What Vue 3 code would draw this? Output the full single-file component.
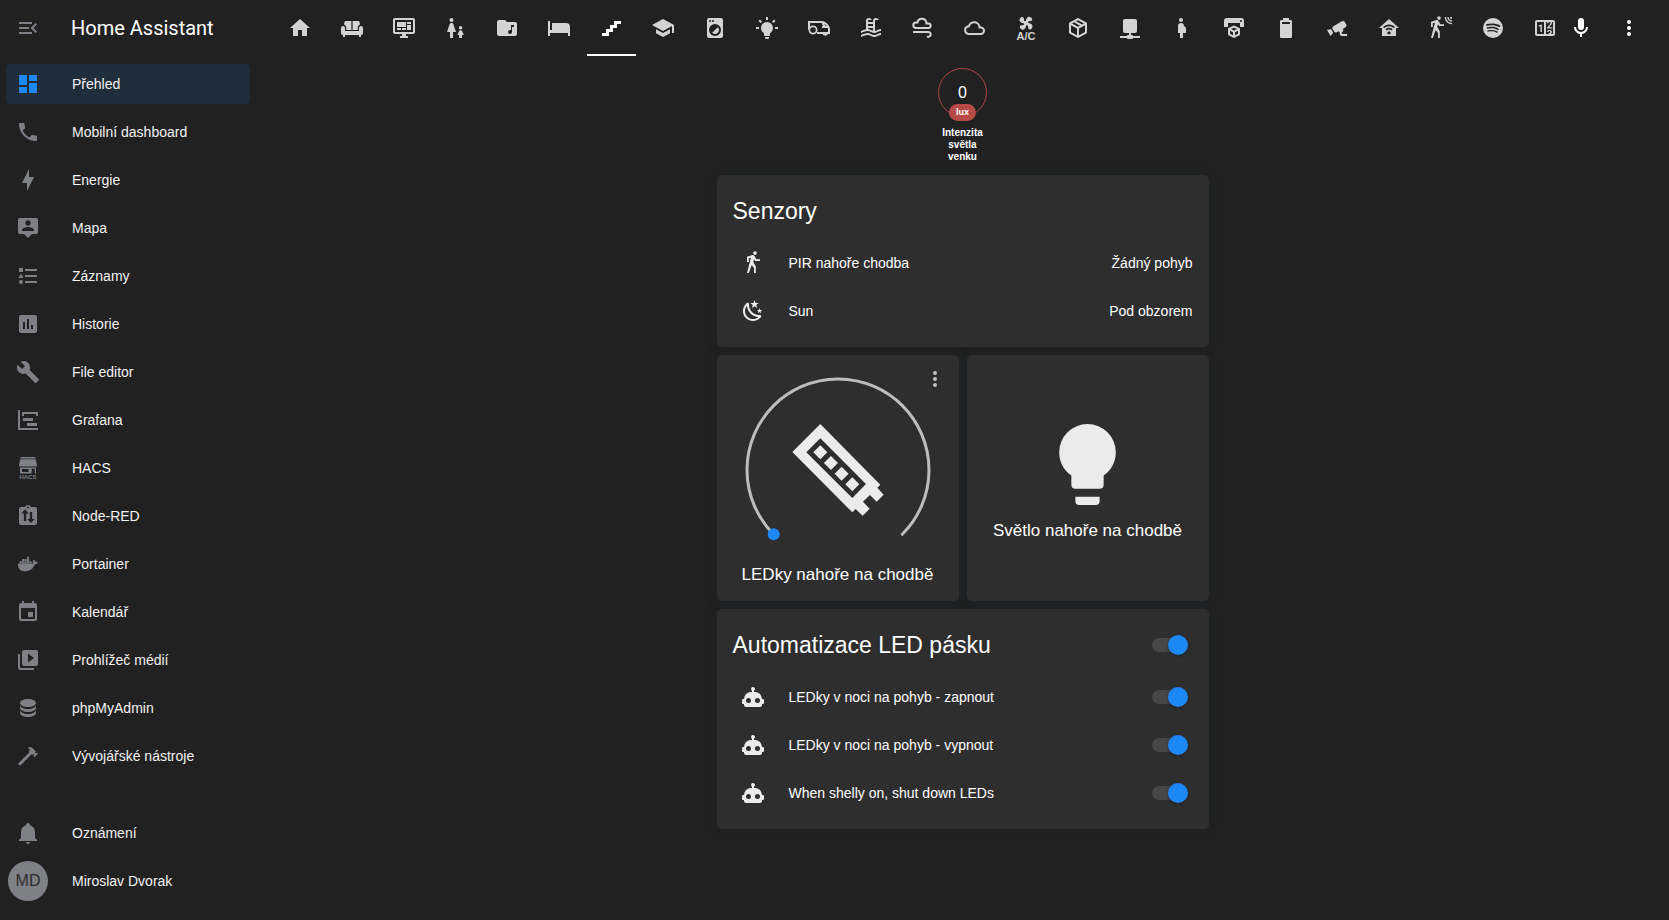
<script setup>
import { h, ref } from 'vue'

const icons = {
  menuOpen: { d: 'M21,15.61L19.59,17L14.58,12L19.59,7L21,8.39L17.44,12L21,15.61M3,6H16V8H3V6M3,13V11H13V13H3M3,18V16H16V18H3Z' },
  dashboard: { d: 'M13,3V9H21V3M13,21H21V11H13M3,21H11V15H3M3,13H11V3H3V13Z' },
  phone: { d: 'M6.62,10.79C8.06,13.62 10.38,15.94 13.21,17.38L15.41,15.18C15.69,14.9 16.08,14.82 16.43,14.93C17.55,15.3 18.75,15.5 20,15.5A1,1 0 0,1 21,16.5V20A1,1 0 0,1 20,21A17,17 0 0,1 3,4A1,1 0 0,1 4,3H7.5A1,1 0 0,1 8.5,4C8.5,5.25 8.7,6.45 9.07,7.57C9.18,7.92 9.1,8.31 8.82,8.59L6.62,10.79Z' },
  bolt: { d: 'M11 15H6L13 1V9H18L11 23V15Z' },
  mapAccount: { d: 'M20,2H4A2,2 0 0,0 2,4V16A2,2 0 0,0 4,18H8L12,22L16,18H20A2,2 0 0,0 22,16V4A2,2 0 0,0 20,2M12,4.3C13.5,4.3 14.7,5.5 14.7,7C14.7,8.5 13.5,9.7 12,9.7C10.5,9.7 9.3,8.5 9.3,7C9.3,5.5 10.5,4.3 12,4.3M18,15H6V14.1C6,12.1 10,11 12,11C14,11 18,12.1 18,14.1V15Z' },
  listType: { d: 'M5,9.5L7.5,14H2.5L5,9.5M3,4H7V8H3V4M5,20A2,2 0 0,0 7,18A2,2 0 0,0 5,16A2,2 0 0,0 3,18A2,2 0 0,0 5,20M9,5V7H21V5H9M9,19H21V17H9V19M9,13H21V11H9V13Z' },
  chartBox: { d: 'M19,3H5C3.89,3 3,3.9 3,5V19A2,2 0 0,0 5,21H19A2,2 0 0,0 21,19V5C21,3.9 20.1,3 19,3M9,17H7V10H9V17M13,17H11V7H13V17M17,17H15V13H17V17Z' },
  wrench: { d: 'M22.7,19L13.6,9.9C14.5,7.6 14,4.9 12.1,3C10.1,1 7.1,0.6 4.7,1.7L9,6L6,9L1.6,4.7C0.4,7.1 0.9,10.1 2.9,12.1C4.8,14 7.5,14.5 9.8,13.6L18.9,22.7C19.3,23.1 19.9,23.1 20.3,22.7L22.6,20.4C23.1,20 23.1,19.3 22.7,19Z' },
  timeline: { d: 'M2,2H4V20H22V22H2V2M7,10H17V13H7V10M11,15H21V18H11V15M6,4H22V8H20V6H8V8H6V4Z' },
  hacs: { d: 'M4.5,1H19.5V2.6H4.5ZM4.3,3.3H19.7L21,9.2A1.4,1.4 0 0,1 19.8,10.6H4.2A1.4,1.4 0 0,1 3,9.2ZM4,11.5H20V17.6H18.8V12.8H15.6V17.6H4ZM6,13V16H12.6V13Z', text: 'HACS', x: 12, y: 23.4, size: 6 },
  clipboardFlow: { d: 'M19,3H15C14.6,1.8 13.4,1 12,1C10.6,1 9.4,1.8 9,3H5A2,2 0 0,0 3,5V19A2,2 0 0,0 5,21H19A2,2 0 0,0 21,19V5A2,2 0 0,0 19,3M12,2.4A1.1,1.1 0 0,1 13.1,3.5A1.1,1.1 0 0,1 12,4.6A1.1,1.1 0 0,1 10.9,3.5A1.1,1.1 0 0,1 12,2.4M9,5.2L12.8,9.4H10.2V17H7.8V9.4H5.2ZM13.8,8H16.2V15H18.8L15,19L11.2,15H13.8Z' },
  docker: { d: 'M21.81 10.25C21.75 10.21 21.25 9.82 20.17 9.82C19.89 9.82 19.61 9.85 19.33 9.9C19.12 8.5 17.95 7.79 17.9 7.76L17.61 7.59L17.43 7.86C17.19 8.22 17 8.63 16.92 9.05C16.72 9.85 16.84 10.61 17.25 11.25C16.76 11.53 15.96 11.6 15.79 11.61H2.62C2.28 11.61 2 11.89 2 12.24C2 13.39 2.18 14.54 2.58 15.62C3.03 16.81 3.71 17.69 4.58 18.23C5.56 18.83 7.17 19.17 8.97 19.17C9.79 19.17 10.61 19.1 11.42 18.95C12.54 18.75 13.62 18.36 14.61 17.79C15.43 17.32 16.16 16.72 16.78 16C17.82 14.83 18.43 13.5 18.88 12.35H19.06C20.2 12.35 20.91 11.89 21.3 11.5C21.55 11.26 21.75 10.97 21.88 10.64L21.96 10.41L21.81 10.25M3.7,9.35H5.75V11.25H3.7ZM6.15,9.35H8.2V11.25H6.15ZM8.6,9.35H10.65V11.25H8.6ZM11.05,9.35H13.1V11.25H11.05ZM13.5,9.35H15.55V11.25H13.5ZM6.15,7.1H8.2V9H6.15ZM8.6,7.1H10.65V9H8.6ZM11.05,7.1H13.1V9H11.05ZM11.05,4.8H13.1V6.7H11.05Z' },
  calendar: { d: 'M19,19H5V8H19M16,1V3H8V1H6V3H5C3.89,3 3,3.89 3,5V19A2,2 0 0,0 5,21H19A2,2 0 0,0 21,19V5C21,3.89 20.1,3 19,3H18V1M17,12H12V17H17V12Z' },
  playBox: { d: 'M4,6H2V20A2,2 0 0,0 4,22H18V20H4V6M20,2H8A2,2 0 0,0 6,4V16A2,2 0 0,0 8,18H20A2,2 0 0,0 22,16V4A2,2 0 0,0 20,2M12,14.5V5.5L18,10L12,14.5Z' },
  database: { d: 'M12,3C7.58,3 4,4.79 4,7C4,9.21 7.58,11 12,11C16.42,11 20,9.21 20,7C20,4.79 16.42,3 12,3M4,9V12C4,14.21 7.58,16 12,16C16.42,16 20,14.21 20,12V9C20,11.21 16.42,13 12,13C7.58,13 4,11.21 4,9M4,14V17C4,19.21 7.58,21 12,21C16.42,21 20,19.21 20,17V14C20,16.21 16.42,18 12,18C7.58,18 4,16.21 4,14Z' },
  hammer: { d: 'M2,19.63L13.43,8.2L12.72,7.5L14.14,6.07L12,3.89C13.2,2.7 15.09,2.7 16.27,3.89L19.87,7.5L18.45,8.91H21.29L22,9.62L18.45,13.21L17.74,12.5V9.62L16.27,11.04L15.56,10.33L4.13,21.76L2,19.63Z' },
  bell: { d: 'M21,19V20H3V19L5,17V11C5,7.9 7.03,5.17 10,4.29C10,4.19 10,4.1 10,4A2,2 0 0,1 12,2A2,2 0 0,1 14,4C14,4.1 14,4.19 14,4.29C16.97,5.17 19,7.9 19,11V17L21,19M14,21A2,2 0 0,1 12,23A2,2 0 0,1 10,21' },
  home: { d: 'M10,20V14H14V20H19V12H22L12,3L2,12H5V20H10Z' },
  sofa: { d: 'M6.5,5H11.4V14H6.2V11.5C6.2,10.2 5.5,9.2 4.2,8.8V7A2,2 0 0,1 6.5,5ZM17.5,5H12.6V14H17.8V11.5C17.8,10.2 18.5,9.2 19.8,8.8V7A2,2 0 0,0 17.5,5ZM3,10A2,2 0 0,1 5,12V15H19V12A2,2 0 0,1 23,12V17A2,2 0 0,1 21,19V21H19V19H5V21H3V19A2,2 0 0,1 1,17V12A2,2 0 0,1 3,10Z' },
  monitor: { d: 'M21,16V4H3V16H21M21,2A2,2 0 0,1 23,4V16A2,2 0 0,1 21,18H14V20H16V22H8V20H10V18H3C1.89,18 1,17.1 1,16V4C1,2.89 1.89,2 3,2H21M5,6H14V11H5V6M15,6H19V8H15V6M19,9V14H15V9H19M5,12H9V14H5V12M10,12H14V14H10V12Z' },
  parent: { d: 'M7.5,2A2,2 0 0,1 9.5,4A2,2 0 0,1 7.5,6A2,2 0 0,1 5.5,4A2,2 0 0,1 7.5,2M6,22V16H3L5.6,8.3C5.9,7.5 6.6,7 7.5,7C8.4,7 9.2,7.5 9.4,8.3L12,16H9V22H6M16.6,10A1.8,1.8 0 0,1 16.6,13.6A1.8,1.8 0 0,1 16.6,10M15.2,22V19H13.4L15,15.3C15.3,14.6 15.9,14.2 16.6,14.2C17.3,14.2 17.9,14.6 18.2,15.3L19.8,19H18V22Z' },
  folderMusic: { d: 'M20,6H12L10,4H4A2,2 0 0,0 2,6V18A2,2 0 0,0 4,20H20A2,2 0 0,0 22,18V8A2,2 0 0,0 20,6M19,11H17V16A2,2 0 0,1 15,18A2,2 0 0,1 13,16A2,2 0 0,1 15,14C15.4,14 15.7,14.1 16,14.3V9H19V11Z' },
  bed: { d: 'M19,7H5V14H3V5H1V20H3V17H21V20H23V11A4,4 0 0,0 19,7' },
  stairs: { d: 'M15,5V9H11V13H7V17H3V20H10V16H14V12H18V8H22V5H15Z' },
  school: { d: 'M12,3L1,9L12,15L21,10.09V17H23V9M5,13.18V17.18L12,21L19,17.18V13.18L12,17L5,13.18Z' },
  washer: { d: 'M14.83,11.17C16.39,12.73 16.39,15.27 14.83,16.83C13.27,18.39 10.73,18.39 9.17,16.83L14.83,11.17M6,2H18A2,2 0 0,1 20,4V20A2,2 0 0,1 18,22H6A2,2 0 0,1 4,20V4A2,2 0 0,1 6,2M7,4A1,1 0 0,0 6,5A1,1 0 0,0 7,6A1,1 0 0,0 8,5A1,1 0 0,0 7,4M10,4A1,1 0 0,0 9,5A1,1 0 0,0 10,6A1,1 0 0,0 11,5A1,1 0 0,0 10,4M12,8A6,6 0 0,0 6,14A6,6 0 0,0 12,20A6,6 0 0,0 18,14A6,6 0 0,0 12,8Z' },
  bulbOn: { d: 'M12,6A6,6 0 0,1 18,12C18,14.22 16.79,16.16 15,17.2V19A1,1 0 0,1 14,20H10A1,1 0 0,1 9,19V17.2C7.21,16.16 6,14.22 6,12A6,6 0 0,1 12,6M14,21V22A1,1 0 0,1 13,23H11A1,1 0 0,1 10,22V21H14M20,11H23V13H20V11M1,11H4V13H1V11M13,1V4H11V1H13M4.92,3.5L7.05,5.64L5.63,7.05L3.5,4.93L4.92,3.5M16.95,5.63L19.07,3.5L20.5,4.93L18.37,7.05L16.95,5.63Z' },
  van: { s: 'M2,13.5V6H14.5C17,6 19.5,8 21,10.2C21.8,11.2 22,12 22,13.5V17H10M15.5,7L18,11H22M15,11H18', d: 'M6,9.5A4.5,4.5 0 0,1 10.5,14A4.5,4.5 0 0,1 6,18.5A4.5,4.5 0 0,1 1.5,14A4.5,4.5 0 0,1 6,9.5M6,11.2A2.8,2.8 0 0,0 3.2,14A2.8,2.8 0 0,0 6,16.8A2.8,2.8 0 0,0 8.8,14A2.8,2.8 0 0,0 6,11.2M15.5,18H21A2.8,2.2 0 0,1 15.5,18Z' },
  pool: { d: 'M2,15C3.67,14.25 5.33,13.5 7,13.17V5A3,3 0 0,1 10,2C11.31,2 12.42,2.83 12.83,4H10A1,1 0 0,0 9,5V6H14V5A3,3 0 0,1 17,2C18.31,2 19.42,2.83 19.83,4H17A1,1 0 0,0 16,5V14.94C18,14.62 20,13 22,13V15C19.78,15 17.56,17 15.33,17C13.11,17 10.89,15 8.67,15C6.44,15 4.22,16 2,17V15M14,8H9V10H14V8M14,12H9V13C10.67,13.16 12.33,14.31 14,14.79V12M2,19C4.22,18 6.44,17 8.67,17C10.89,17 13.11,19 15.33,19C17.56,19 19.78,17 22,17V19C19.78,19 17.56,21 15.33,21C13.11,21 10.89,19 8.67,19C6.44,19 4.22,20 2,21V19Z' },
  wind: { s: 'M6,12A2.7,2.7 0 0,1 6,6.6H7.4A4.6,4.6 0 0,1 16.4,6.4V7.6H18.4A2.2,2.2 0 0,1 18.4,12ZM3,16H18.5A2.4,2.4 0 1,1 17,20.4' },
  cloud: { s: 'M6.2,18A4,4 0 0,1 6.2,10.2H7A5.4,5.4 0 0,1 17.6,11.6H18.8A3.2,3.2 0 0,1 18.8,18Z' },
  airCon: { d: 'M12.5,2C17,2 17.11,5.57 14.75,6.75C13.76,7.24 13.32,8.29 13.13,9.22C13.61,9.42 14.03,9.73 14.35,10.13C18.05,8.13 22.03,8.92 22.03,12.5C22.03,17 18.46,17.1 17.28,14.73C16.78,13.74 15.72,13.3 14.79,13.11C14.59,13.59 14.28,14 13.88,14.34C15.87,18.03 15.08,22 11.5,22C7,22 6.91,18.42 9.27,17.24C10.25,16.75 10.69,15.71 10.89,14.79C10.4,14.59 9.97,14.27 9.65,13.87C5.96,15.85 2,15.07 2,11.5C2,7 5.56,6.89 6.74,9.26C7.24,10.25 8.29,10.68 9.22,10.87C9.41,10.39 9.73,9.97 10.14,9.65C8.15,5.96 8.94,2 12.5,2Z', t: 'translate(12 7.2) rotate(35) scale(.76) translate(-12 -12)', text: 'A/C', x: 12, y: 24, size: 11 },
  package: { d: 'M21,16.5C21,16.88 20.79,17.21 20.47,17.38L12.57,21.82C12.41,21.94 12.21,22 12,22C11.79,22 11.59,21.94 11.43,21.82L3.53,17.38C3.21,17.21 3,16.88 3,16.5V7.5C3,7.12 3.21,6.79 3.53,6.62L11.43,2.18C11.59,2.06 11.79,2 12,2C12.21,2 12.41,2.06 12.57,2.18L20.47,6.62C20.79,6.79 21,7.12 21,7.5V16.5M12,4.15L10.11,5.22L16,8.61L17.96,7.5L12,4.15M6.04,7.5L12,10.85L13.96,9.75L8.08,6.35L6.04,7.5M5,15.91L11,19.29V12.58L5,9.21V15.91M19,15.91V9.21L13,12.58V19.29L19,15.91Z' },
  server: { d: 'M15,20A1,1 0 0,0 14,19H13V17H17A2,2 0 0,0 19,15V5A2,2 0 0,0 17,3H7A2,2 0 0,0 5,5V15A2,2 0 0,0 7,17H11V19H10A1,1 0 0,0 9,20H2V22H9A1,1 0 0,0 10,23H14A1,1 0 0,0 15,22H22V20H15Z' },
  pregnant: { d: 'M9,4A2,2 0 0,1 11,2A2,2 0 0,1 13,4A2,2 0 0,1 11,6A2,2 0 0,1 9,4M16,13C16,11.66 15.17,10.5 14,10A3,3 0 0,0 11,7A3,3 0 0,0 8,10V17H10V22H13V17H16V13Z' },
  printer3d: { d: 'M19,6A1,1 0 0,0 20,5A1,1 0 0,0 19,4A1,1 0 0,0 18,5A1,1 0 0,0 19,6M19,2A3,3 0 0,1 22,5V11H18V7H6V11H2V5A3,3 0 0,1 5,2H19M18,18.25C18,18.63 17.79,18.96 17.47,19.13L12.57,21.82C12.4,21.94 12.21,22 12,22C11.79,22 11.59,21.94 11.43,21.82L6.53,19.13C6.21,18.96 6,18.63 6,18.25V13C6,12.62 6.21,12.29 6.53,12.12L11.43,9.68C11.59,9.56 11.79,9.5 12,9.5C12.21,9.5 12.4,9.56 12.57,9.68L17.47,12.12C17.79,12.29 18,12.62 18,13V18.25M12,11.65L9.04,13L12,14.6L14.96,13L12,11.65M8,17.66L11,19.29V16.33L8,14.71V17.66M16,17.66V14.71L13,16.33V19.29L16,17.66Z' },
  battery: { d: 'M16.67,4H15V2H9V4H7.33A1.33,1.33 0 0,0 6,5.33V20.67C6,21.4 6.6,22 7.33,22H16.67A1.33,1.33 0 0,0 18,20.67V5.33C18,4.6 17.4,4 16.67,4M16,8H8V6H16V8' },
  cctv: { d: 'M18.15,4.94C17.77,4.91 17.37,5 17,5.2L8.35,10.2C7.39,10.76 7.07,12 7.62,12.94L9.12,15.53C9.67,16.5 10.89,16.82 11.85,16.27L13.65,15.23C13.92,15.69 14.32,16.06 14.81,16.27V18.04C14.81,19.13 15.7,20 16.81,20H22V18.04H16.81V16.27C17.72,15.87 18.31,14.97 18.31,14C18.31,13.54 18.19,13.11 17.97,12.73L20.5,11.27C21.47,10.71 21.8,9.5 21.24,8.53L19.74,5.94C19.4,5.34 18.79,5 18.15,4.94M6.22,13.17L2,13.87L2.75,15.17L4.75,18.63L5.5,19.93L8.22,16.63L6.22,13.17Z' },
  homeWifi: { d: 'M12,3L2,12H5V20H19V12H22L12,3M12,8.5C14.34,8.5 16.46,9.43 18,10.94L16.8,12.12C15.58,10.91 13.88,10.17 12,10.17C10.12,10.17 8.42,10.91 7.2,12.12L6,10.94C7.54,9.43 9.66,8.5 12,8.5M12,11.83C13.4,11.83 14.67,12.39 15.6,13.3L14.4,14.47C13.79,13.87 12.94,13.5 12,13.5C11.06,13.5 10.21,13.87 9.6,14.47L8.4,13.3C9.33,12.39 10.6,11.83 12,11.83M12,15.17C12.94,15.17 13.7,15.91 13.7,16.83C13.7,17.75 12.94,18.5 12,18.5C11.06,18.5 10.3,17.75 10.3,16.83C10.3,15.91 11.06,15.17 12,15.17Z' },
  motion: { d: 'M10,0.2C9,0.2 8.2,1 8.2,2C8.2,3 9,3.8 10,3.8C11,3.8 11.8,3 11.8,2C11.8,1 11,0.2 10,0.2M15.67,1A7.33,7.33 0 0,0 23,8.33V7A6,6 0 0,1 17,1H15.67M18.33,1C18.33,3.58 20.42,5.67 23,5.67V4.33C21.16,4.33 19.67,2.84 19.67,1H18.33M21,1A2,2 0 0,0 23,3V1H21M7.92,4.03C7.75,4.03 7.58,4.06 7.42,4.11L2,5.8V11H3.8V7.33L5.91,6.67L2,22H3.8L6.67,13.89L9,17V22H10.8V15.59L8.31,11.05L9.04,8.18L10.12,10H15V8.2H11.38L9.38,4.87C9.08,4.37 8.54,4.03 7.92,4.03Z' },
  spotify: { d: 'M17.9,10.9C14.7,9 9.35,8.8 6.3,9.75C5.8,9.9 5.3,9.6 5.15,9.15C5,8.65 5.3,8.15 5.75,8C9.3,6.95 15.15,7.15 18.85,9.35C19.3,9.6 19.45,10.2 19.2,10.65C18.95,11 18.35,11.15 17.9,10.9M17.8,13.7C17.55,14.05 17.1,14.2 16.75,13.95C14.05,12.3 9.95,11.8 6.8,12.8C6.4,12.9 5.95,12.7 5.85,12.3C5.75,11.9 5.95,11.45 6.35,11.35C10,10.25 14.5,10.8 17.6,12.7C17.9,12.85 18.05,13.35 17.8,13.7M16.6,16.45C16.4,16.75 16.05,16.85 15.75,16.65C13.4,15.2 10.45,14.9 6.95,15.7C6.6,15.8 6.3,15.55 6.2,15.25C6.1,14.9 6.35,14.6 6.65,14.5C10.45,13.65 13.75,14 16.35,15.6C16.7,15.75 16.75,16.15 16.6,16.45M12,2A10,10 0 0,0 2,12A10,10 0 0,0 12,22A10,10 0 0,0 22,12A10,10 0 0,0 12,2Z' },
  counter: { d: 'M4,4H20A2,2 0 0,1 22,6V18A2,2 0 0,1 20,20H4A2,2 0 0,1 2,18V6A2,2 0 0,1 4,4M4,6V18H11V6H4M20,18V6H18.76C19,6.54 18.95,7.07 18.95,7.13C18.88,7.8 18.41,8.5 18.24,8.75L15.91,11.3L19.23,11.28L19.24,12.5L14.04,12.47L14,11.47C14,11.47 17.05,8.24 17.2,7.95C17.34,7.67 17.91,6 16.5,6C15.27,6.05 15.41,7.3 15.41,7.3L13.87,7.31C13.87,7.31 13.88,6.65 14.25,6H13V18H15.58L15.57,17.14L16.54,17.13C16.54,17.13 17.45,16.97 17.46,16.08C17.5,15.08 16.65,15.08 16.5,15.08C16.37,15.08 15.43,15.13 15.43,15.95H13.91C13.91,15.95 13.95,13.89 16.5,13.89C19.1,13.89 18.96,15.91 18.96,15.91C18.96,15.91 19,17.16 17.85,17.63L18.37,18H20M8.92,16H7.42V10.2L5.62,10.76V9.53L8.76,8.41H8.92V16Z' },
  mic: { d: 'M12,2A3,3 0 0,1 15,5V11A3,3 0 0,1 12,14A3,3 0 0,1 9,11V5A3,3 0 0,1 12,2M19,11C19,14.53 16.39,17.44 13,17.93V21H11V17.93C7.61,17.44 5,14.53 5,11H7A5,5 0 0,0 12,16A5,5 0 0,0 17,11H19Z' },
  dots: { d: 'M12,16A2,2 0 0,1 14,18A2,2 0 0,1 12,20A2,2 0 0,1 10,18A2,2 0 0,1 12,16M12,10A2,2 0 0,1 14,12A2,2 0 0,1 12,14A2,2 0 0,1 10,12A2,2 0 0,1 12,10M12,4A2,2 0 0,1 14,6A2,2 0 0,1 12,8A2,2 0 0,1 10,6A2,2 0 0,1 12,4Z' },
  walk: { d: 'M14.12,10H19V8.2H15.38L13.38,4.87C13.08,4.37 12.54,4.03 11.92,4.03C11.74,4.03 11.58,4.06 11.42,4.11L6,5.8V11H7.8V7.33L9.91,6.67L6,22H7.8L10.67,13.89L13,17V22H14.8V15.59L12.31,11.05L13.04,8.18M14,3.8C15,3.8 15.8,3 15.8,2C15.8,1 15,0.2 14,0.2C13,0.2 12.2,1 12.2,2C12.2,3 13,3.8 14,3.8Z' },
  night: { d: 'M17.75,4.09L15.22,6.03L16.13,9.09L13.5,7.28L10.87,9.09L11.78,6.03L9.25,4.09L12.44,4L13.5,1L14.56,4L17.75,4.09M21.25,11L19.61,12.25L20.2,14.23L18.5,13.06L16.8,14.23L17.39,12.25L15.75,11L17.81,10.95L18.5,9L19.19,10.95L21.25,11M18.97,15.95C19.8,15.87 20.69,17.05 20.16,17.8C19.84,18.25 19.5,18.67 19.08,19.07C15.17,23 8.84,23 4.94,19.07C1.03,15.17 1.03,8.83 4.94,4.93C5.34,4.53 5.76,4.17 6.21,3.85C6.96,3.32 8.14,4.21 8.06,5.04C7.79,7.9 8.75,10.87 10.95,13.06C13.14,15.26 16.1,16.22 18.97,15.95M17.33,17.97C14.5,17.81 11.7,16.64 9.53,14.5C7.36,12.31 6.2,9.5 6.04,6.68C3.23,9.82 3.34,14.64 6.35,17.66C9.37,20.67 14.19,20.78 17.33,17.97Z' },
  robot: { d: 'M12,2A2,2 0 0,1 14,4C14,4.74 13.6,5.39 13,5.73V7H14A7,7 0 0,1 21,14H22A1,1 0 0,1 23,15V18A1,1 0 0,1 22,19H21V20A2,2 0 0,1 19,22H5A2,2 0 0,1 3,20V19H2A1,1 0 0,1 1,18V15A1,1 0 0,1 2,14H3A7,7 0 0,1 10,7H11V5.73C10.4,5.39 10,4.74 10,4A2,2 0 0,1 12,2M7.5,13A2.5,2.5 0 0,0 5,15.5A2.5,2.5 0 0,0 7.5,18A2.5,2.5 0 0,0 10,15.5A2.5,2.5 0 0,0 7.5,13M16.5,13A2.5,2.5 0 0,0 14,15.5A2.5,2.5 0 0,0 16.5,18A2.5,2.5 0 0,0 19,15.5A2.5,2.5 0 0,0 16.5,13Z' },
  bulb: { d: 'M12,2A7,7 0 0,0 5,9C5,11.38 6.19,13.47 8,14.74V17A1,1 0 0,0 9,18H15A1,1 0 0,0 16,17V14.74C17.81,13.47 19,11.38 19,9A7,7 0 0,0 12,2M9,21A1,1 0 0,0 10,22H14A1,1 0 0,0 15,21V20H9V21Z' }
}

const Icon = ({ name }) => {
  const i = icons[name]
  return h('svg', { class: 'icon', viewBox: '0 0 24 24', width: 24, height: 24, 'aria-hidden': 'true' }, [
    i.d && h('path', { d: i.d, transform: i.t, fill: 'currentColor', 'fill-rule': 'evenodd' }),
    i.s && h('path', { d: i.s, fill: 'none', stroke: 'currentColor', 'stroke-width': 2 }),
    i.text && h('text', { x: i.x, y: i.y, 'font-size': i.size, 'font-weight': 700, 'text-anchor': 'middle', fill: 'currentColor' }, i.text)
  ])
}

const menu = [
  ['Přehled', 'dashboard'], ['Mobilní dashboard', 'phone'], ['Energie', 'bolt'], ['Mapa', 'mapAccount'],
  ['Záznamy', 'listType'], ['Historie', 'chartBox'], ['File editor', 'wrench'], ['Grafana', 'timeline'],
  ['HACS', 'hacs'], ['Node-RED', 'clipboardFlow'], ['Portainer', 'docker'], ['Kalendář', 'calendar'],
  ['Prohlížeč médií', 'playBox'], ['phpMyAdmin', 'database'], ['Vývojářské nástroje', 'hammer']
]
const tabs = [
  'home', 'sofa', 'monitor', 'parent', 'folderMusic', 'bed', 'stairs', 'school', 'washer', 'bulbOn', 'van', 'pool',
  'wind', 'cloud', 'airCon', 'package', 'server', 'pregnant', 'printer3d', 'battery', 'cctv', 'homeWifi', 'motion',
  'spotify', 'counter'
]
const activeMenu = ref('Přehled')
const activeTab = ref('stairs')
const sensors = [
  { icon: 'walk', name: 'PIR nahoře chodba', state: 'Žádný pohyb' },
  { icon: 'night', name: 'Sun', state: 'Pod obzorem' }
]
const allOn = ref(true)
const automations = ref([
  { name: 'LEDky v noci na pohyb - zapnout', on: true },
  { name: 'LEDky v noci na pohyb - vypnout', on: true },
  { name: 'When shelly on, shut down LEDs', on: true }
])
</script>

<template>
  <div class="app">
    <aside class="sidebar">
      <div class="brand">
        <button type="button" class="icon-btn brand-btn" aria-label="Menu"><Icon name="menuOpen" /></button>
        <span class="brand-name">Home Assistant</span>
      </div>
      <nav class="menu">
        <a
          v-for="[label, icon] in menu"
          :key="label"
          href="#"
          class="menu-item"
          :class="{ active: label === activeMenu }"
          @click.prevent="activeMenu = label"
        >
          <Icon :name="icon" /><span>{{ label }}</span>
        </a>
      </nav>
      <div class="menu menu-bottom">
        <a href="#" class="menu-item" @click.prevent><Icon name="bell" /><span>Oznámení</span></a>
        <a href="#" class="menu-item user" @click.prevent><span class="avatar">MD</span><span>Miroslav Dvorak</span></a>
      </div>
    </aside>

    <div class="panel">
      <header class="toolbar">
        <nav class="tabs">
          <button
            v-for="t in tabs"
            :key="t"
            type="button"
            class="tab"
            :class="{ active: t === activeTab }"
            :aria-label="t"
            @click="activeTab = t"
          >
            <Icon :name="t" />
          </button>
        </nav>
        <button type="button" class="icon-btn mic" aria-label="Assist"><Icon name="mic" /></button>
        <button type="button" class="icon-btn" aria-label="More"><Icon name="dots" /></button>
      </header>

      <main class="view">
        <div class="badge">
          <div class="badge-circle">
            <span class="badge-value">0</span>
            <span class="badge-unit">lux</span>
          </div>
          <div class="badge-title">Intenzita světla venku</div>
        </div>

        <section class="card">
          <div class="card-header"><h1>Senzory</h1></div>
          <div v-for="s in sensors" :key="s.name" class="row">
            <span class="row-icon"><Icon :name="s.icon" /></span>
            <span class="row-name">{{ s.name }}</span>
            <span>{{ s.state }}</span>
          </div>
        </section>

        <div class="pair">
          <section class="card light">
            <button type="button" class="icon-btn light-more" aria-label="More"><Icon name="dots" /></button>
            <svg class="dial" viewBox="0 0 200 200" role="img" aria-label="Jas">
              <path d="M35.7,164.3A91,91 0 1,1 164.3,164.3" fill="none" stroke="#bdbdbd" stroke-width="3" stroke-linecap="round" />
              <circle cx="35.7" cy="164.3" r="6" fill="#1b88f5" />
              <g fill="#ebebeb" fill-rule="evenodd" transform="translate(54.3 54) scale(.3333)">
                <path d="M84,0L264,182L255,191L274,212L253,233L233,213L212,233L232,254L211,275L190,255L180,265L0,84ZM84,43L42,85L180,222L221,180Z" />
                <path d="M84,64L105,85L84,106L63,85ZM116,96L137,117L116,138L95,117ZM148,128L169,149L148,170L127,149ZM180,160L201,181L180,202L159,181Z" />
              </g>
            </svg>
            <div class="tile-name">LEDky nahoře na chodbě</div>
          </section>
          <button type="button" class="card tile">
            <Icon name="bulb" />
            <span class="tile-name">Světlo nahoře na chodbě</span>
          </button>
        </div>

        <section class="card">
          <div class="card-header">
            <h1>Automatizace LED pásku</h1>
            <input v-model="allOn" type="checkbox" class="switch" aria-label="Automatizace LED pásku" />
          </div>
          <div v-for="(a, i) in automations" :key="a.name" class="row">
            <span class="row-icon"><Icon name="robot" /></span>
            <label class="row-name" :for="'automation-' + i">{{ a.name }}</label>
            <input :id="'automation-' + i" v-model="a.on" type="checkbox" class="switch" />
          </div>
        </section>
      </main>
    </div>
  </div>
</template>

<style>
body {
  margin: 0;
  background: #212121;
}
</style>

<style scoped>
.app {
  display: flex;
  min-height: 100vh;
  background: #212121;
  color: #fff;
  font-family: "Liberation Sans", Arial, sans-serif;
  font-size: 14px;
  line-height: 20px;
}
.icon {
  display: block;
  flex: none;
  overflow: visible;
}
button {
  border: 0;
  padding: 0;
  background: none;
  color: inherit;
  font: inherit;
  cursor: pointer;
}
.icon-btn {
  display: flex;
  align-items: center;
  justify-content: center;
  width: 48px;
  height: 48px;
  flex: none;
}

.sidebar {
  display: flex;
  flex-direction: column;
  width: 256px;
  flex: none;
}
.brand {
  display: flex;
  align-items: center;
  gap: 19px;
  height: 56px;
  padding-left: 4px;
}
.brand-btn {
  color: #7f8085;
}
.brand-name {
  font-family: Roboto, sans-serif;
  font-size: 20px;
}
.menu {
  display: flex;
  flex-direction: column;
  gap: 8px;
  padding: 8px 6px;
}
.menu-bottom {
  margin-top: auto;
  padding-bottom: 19px;
}
.menu-item {
  display: flex;
  align-items: center;
  gap: 32px;
  height: 40px;
  padding-left: 10px;
  border-radius: 4px;
  color: #f2f2f2;
  text-decoration: none;
}
.menu-item .icon {
  color: #7f8085;
}
.menu-item.active {
  background: #202d3a;
}
.menu-item.active .icon {
  color: #1b88f5;
}
.user {
  gap: 24px;
  padding-left: 2px;
}
.avatar {
  width: 40px;
  border-radius: 50%;
  background: #7f8085;
  color: #2c2c2e;
  font-size: 16px;
  line-height: 40px;
  text-align: center;
}

.panel {
  flex: 1;
  min-width: 0;
}
.toolbar {
  display: flex;
  align-items: center;
  height: 56px;
  padding: 0 16px 0 18px;
}
.tabs {
  display: flex;
  flex: 1;
  height: 56px;
}
.tab {
  flex: 1;
  display: flex;
  align-items: center;
  justify-content: center;
  position: relative;
  color: #d3d3d3;
}
.tab.active {
  color: #fff;
}
.tab.active::after {
  content: "";
  position: absolute;
  left: 2px;
  right: 1px;
  bottom: 0;
  height: 2px;
  background: #fff;
}
.mic {
  width: 20px;
  margin-right: 14px;
}

.view {
  display: flex;
  flex-direction: column;
  gap: 8px;
  max-width: 492px;
  margin: 0 auto;
  padding: 12px 8px 0;
}
.badge {
  display: flex;
  flex-direction: column;
  align-items: center;
  align-self: center;
  width: 56px;
  gap: 10px;
  margin-bottom: 4px;
}
.badge-circle {
  position: relative;
  display: flex;
  align-items: center;
  justify-content: center;
  box-sizing: border-box;
  width: 49px;
  height: 49px;
  border: 1px solid #b24443;
  border-radius: 50%;
}
.badge-value {
  font-size: 16px;
}
.badge-unit {
  position: absolute;
  bottom: -5px;
  left: 10px;
  right: 10px;
  border-radius: 9px;
  background: #b84a48;
  font-size: 9px;
  font-weight: 700;
  line-height: 17px;
  text-align: center;
}
.badge-title {
  font-size: 10px;
  font-weight: 700;
  line-height: 12px;
  text-align: center;
}

.card {
  box-sizing: border-box;
  border-radius: 5px;
  background: #2e2e2e;
  box-shadow: 0 0 10px rgba(24, 36, 48, 0.35);
  padding-bottom: 12px;
}
.card-header {
  display: flex;
  align-items: center;
  justify-content: space-between;
  padding: 12px 16px 4px;
}
h1 {
  margin: 0;
  font-size: 23px;
  font-weight: 400;
  line-height: 48px;
}
.row {
  display: flex;
  align-items: center;
  height: 48px;
  padding: 0 16px;
}
.row-icon {
  display: flex;
  justify-content: center;
  width: 40px;
  margin-right: 16px;
  color: #ebebeb;
}
.row-name {
  flex: 1;
}
.switch {
  appearance: none;
  position: relative;
  width: 36px;
  height: 20px;
  margin: 0 5px;
  cursor: pointer;
}
.switch::before {
  content: "";
  position: absolute;
  inset: 3px 0;
  border-radius: 7px;
  background: #474747;
}
.switch::after {
  content: "";
  position: absolute;
  top: 0;
  left: 0;
  width: 20px;
  height: 20px;
  border-radius: 50%;
  background: #bdbdbd;
  box-shadow: 0 1px 3px rgba(0, 0, 0, 0.4);
}
.switch:checked::after {
  left: 16px;
  background: #1b88f5;
}

.pair {
  display: grid;
  grid-template-columns: 1fr 1fr;
  gap: 8px;
}
.light {
  position: relative;
  display: flex;
  flex-direction: column;
  align-items: center;
  padding: 15px 0 16px;
}
.light-more {
  position: absolute;
  top: 0;
  right: 0;
  color: #bfc2c7;
}
.dial {
  width: 200px;
  height: 200px;
  margin-bottom: -6px;
}
.tile-name {
  font-size: 17px;
  line-height: 21px;
}
.tile {
  display: flex;
  flex-direction: column;
  align-items: center;
  justify-content: center;
  gap: 7px;
  padding: 0;
}
.tile .icon {
  width: 97px;
  height: 97px;
  color: #ebebeb;
}
</style>
